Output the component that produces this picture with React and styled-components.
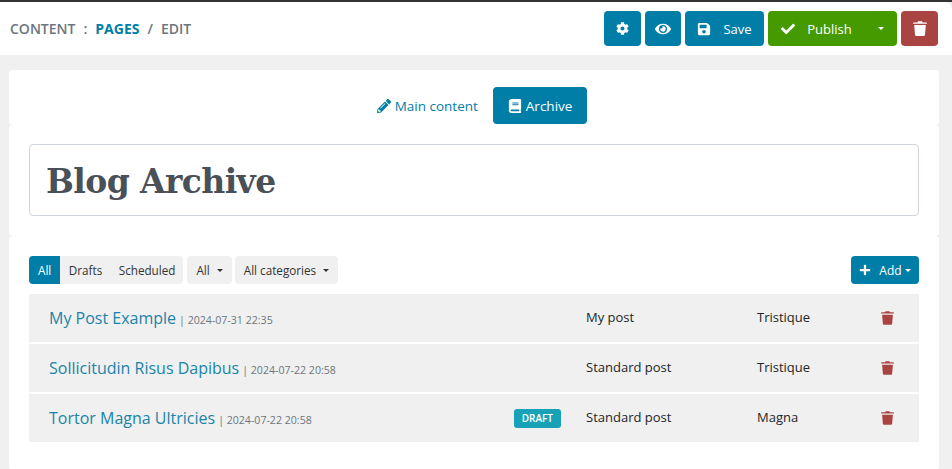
import React from 'react'
import styled, { createGlobalStyle } from 'styled-components'
import { FaCog, FaEye, FaSave, FaCheck, FaPencilAlt, FaBook, FaPlus } from 'react-icons/fa'

const GlobalStyle = createGlobalStyle`
  html, body {
    margin: 0;
    height: 100%;
    background: #f0f0f0;
    overflow: hidden;
  }
  body {
    font-family: "Open Sans", "Noto Sans", sans-serif;
    font-size: 13px;
    color: #212529;
  }
`

const Page = styled.div`
  border-top: 2px solid #333;
`

const Header = styled.header`
  display: flex;
  align-items: center;
  justify-content: space-between;
  height: 53px;
  padding: 0 14px 0 10px;
  background: #fff;
  border-top-right-radius: 8px;
`

const Crumbs = styled.div`
  display: flex;
  gap: 8px;
  font-size: 14px;
  font-weight: 600;
  color: #6c757d;
  text-transform: uppercase;
`

const CrumbLink = styled.span`
  color: #007ea7;
  font-weight: 700;
`

const Toolbar = styled.div`
  display: flex;
  gap: 4px;
`

const ActionButton = styled.button`
  display: flex;
  align-items: center;
  justify-content: center;
  gap: 12px;
  width: ${p => p.$width}px;
  height: 35px;
  padding: 0;
  border: 0;
  border-radius: 4px;
  background: ${p => p.$bg || '#007ea7'};
  color: #fff;
  font: 13px "Open Sans", sans-serif;
`

const Caret = styled.span`
  display: inline-block;
  border-top: ${p => p.$size || 3}px solid currentColor;
  border-left: ${p => p.$size || 3}px solid transparent;
  border-right: ${p => p.$size || 3}px solid transparent;
  margin-left: ${p => p.$gap || 0}px;
`

const Main = styled.main`
  margin: 15px 13px 0 9px;
`

const Card = styled.section`
  background: #fff;
  border-radius: 4px;
  padding: ${p => p.$pad};
`

const Tabs = styled.nav`
  display: flex;
  justify-content: center;
  align-items: center;
  padding-left: 1px;
`

const Tab = styled.button`
  display: flex;
  align-items: center;
  gap: 4px;
  height: 37px;
  padding: 0 15px;
  border: 0;
  border-radius: 4px;
  background: ${p => (p.$active ? '#007ea7' : 'transparent')};
  color: ${p => (p.$active ? '#fff' : '#007ea7')};
  font: 13.5px "Open Sans", sans-serif;
`

const TitleBox = styled.div`
  box-sizing: border-box;
  height: 72px;
  padding: 2px 0 0 16px;
  display: flex;
  align-items: center;
  border: 1px solid #ced4da;
  border-radius: 4px;
  font-family: "DejaVu Serif", serif;
  font-size: 33px;
  font-weight: 700;
  letter-spacing: -0.6px;
  color: #495057;
`

const FilterRow = styled.div`
  display: flex;
  align-items: center;
  justify-content: space-between;
  margin-bottom: 10px;
`

const Filters = styled.div`
  display: flex;
  gap: 3px;
`

const Group = styled.div`
  display: flex;
  border-radius: 4px;
  overflow: hidden;
  background: #f0f0f0;
  margin-right: 1px;
`

const FilterButton = styled.button`
  display: flex;
  align-items: center;
  gap: 7px;
  height: 28px;
  padding: 0 ${p => p.$pad || 9}px;
  border: 0;
  border-radius: ${p => (p.$solo ? 4 : 0)}px;
  background: ${p => (p.$active ? '#007ea7' : '#f0f0f0')};
  color: ${p => (p.$active ? '#fff' : '#333')};
  font: 11.7px "Open Sans", sans-serif;
`

const AddButton = styled.button`
  display: flex;
  align-items: center;
  gap: 3px;
  width: 68px;
  height: 28px;
  justify-content: center;
  padding: 0;
  border: 0;
  border-radius: 4px;
  background: #007ea7;
  color: #fff;
  font: 12px "Open Sans", sans-serif;
`

const AddIcon = styled(FaPlus)`
  margin-right: 5px;
`

const Rows = styled.div`
  display: flex;
  flex-direction: column;
  gap: 2px;
`

const Row = styled.div`
  display: grid;
  grid-template-columns: 1fr 171px 124px 38px;
  align-items: center;
  height: 48px;
  padding-left: 20px;
  background: #f0f0f0;
`

const TitleCell = styled.div`
  display: flex;
  align-items: baseline;
  padding-right: 25px;
`

const PostLink = styled.span`
  color: #1b84a8;
  font-size: 16px;
`

const Stamp = styled.span`
  margin-left: 3px;
  color: #6c757d;
  font-size: 10.6px;
`

const Badge = styled.span`
  margin-left: auto;
  align-self: center;
  padding: 3px 8px;
  border-radius: 3px;
  background: #17a2b8;
  color: #fff;
  font-size: 10px;
  font-weight: 600;
  line-height: 13px;
`

const MetaCell = styled.span`
  padding-bottom: 2px;
`

const DeleteIcon = styled.span`
  display: flex;
  color: #a94442;
`

// Tapered bin with a flat lid and small handle
const TrashIcon = ({ size = 14 }) => (
  <svg width={size} height={size * 15 / 14} viewBox="0 0 14 15" fill="currentColor">
    <path d="M5 .2h4l.6 1.2h3.7a.6.6 0 01.6.6v.7H.1V2a.6.6 0 01.6-.6h3.7z" />
    <path d="M1.2 4h11.6l-.8 9.8a1.2 1.2 0 01-1.2 1.1H3.2A1.2 1.2 0 012 13.8z" />
  </svg>
)

const posts = [
  { title: 'My Post Example', date: '2024-07-31 22:35', type: 'My post', category: 'Tristique' },
  { title: 'Sollicitudin Risus Dapibus', date: '2024-07-22 20:58', type: 'Standard post', category: 'Tristique' },
  { title: 'Tortor Magna Ultricies', date: '2024-07-22 20:58', type: 'Standard post', category: 'Magna', draft: true },
]

const App = () => (
  <Page>
    <GlobalStyle />
    <Header>
      <Crumbs>
        <span>Content</span>
        <span>:</span>
        <CrumbLink>Pages</CrumbLink>
        <span>/</span>
        <span>Edit</span>
      </Crumbs>
      <Toolbar>
        <ActionButton $width={37}><FaCog size={13} /></ActionButton>
        <ActionButton $width={36}><FaEye size={16} /></ActionButton>
        <ActionButton $width={79}><FaSave size={14} />Save</ActionButton>
        <ActionButton $width={129} $bg="#459a00">
          <FaCheck size={14} />Publish<Caret $gap={14} $size={3.5} />
        </ActionButton>
        <ActionButton $width={37} $bg="#a94442"><TrashIcon size={14} /></ActionButton>
      </Toolbar>
    </Header>
    <Main>
      <Card $pad="17px 20px 1px">
        <Tabs>
          <Tab><FaPencilAlt size={14} />Main content</Tab>
          <Tab $active><FaBook size={14} />Archive</Tab>
        </Tabs>
      </Card>
      <Card $pad="19px 20px 20px">
        <TitleBox>Blog Archive</TitleBox>
      </Card>
      <Card $pad="20px 20px 28px">
        <FilterRow>
          <Filters>
            <Group>
              <FilterButton $active>All</FilterButton>
              <FilterButton $pad={8.5}>Drafts</FilterButton>
              <FilterButton $pad={8}>Scheduled</FilterButton>
            </Group>
            <FilterButton $solo>All<Caret /></FilterButton>
            <FilterButton $solo>All categories<Caret /></FilterButton>
          </Filters>
          <AddButton><AddIcon size={12} />Add<Caret /></AddButton>
        </FilterRow>
        <Rows>
          {posts.map(post => (
            <Row key={post.title}>
              <TitleCell>
                <PostLink>{post.title}</PostLink>
                <Stamp>| {post.date}</Stamp>
                {post.draft && <Badge>DRAFT</Badge>}
              </TitleCell>
              <MetaCell>{post.type}</MetaCell>
              <MetaCell>{post.category}</MetaCell>
              <DeleteIcon><TrashIcon size={13} /></DeleteIcon>
            </Row>
          ))}
        </Rows>
      </Card>
    </Main>
  </Page>
)

export default App
